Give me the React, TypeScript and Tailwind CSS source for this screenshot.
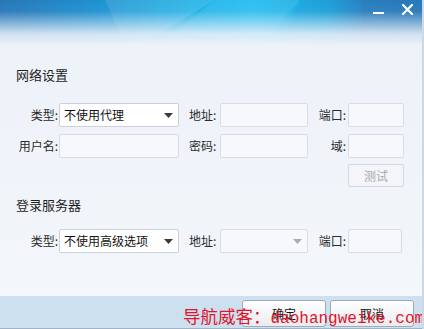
import React from "react";

function Arrow({ color }: { color: string }) {
  return (
    <svg width="9" height="5" viewBox="0 0 9 5">
      <polygon points="0,0 9,0 4.5,5" fill={color} />
    </svg>
  );
}

function Select({ text, width, disabled }: { text?: string; width: string; disabled?: boolean }) {
  return (
    <div
      className={`${width} h-[24px] flex items-center justify-between pl-[4px] pr-[5px] border rounded-[2px] ${
        disabled ? "bg-[#f6f8fb] border-[#d6dde6]" : "bg-white border-[#c9d2dc]"
      }`}
    >
      <span className="text-[12px] text-[#111] leading-none">{text}</span>
      <Arrow color={disabled ? "#a9adb2" : "#3a3a3a"} />
    </div>
  );
}

function Input({ width }: { width: string }) {
  return <div className={`${width} h-[24px] bg-[#f6f8fb] border border-[#d6dde6] rounded-[2px]`} />;
}

function L1({ children }: { children: React.ReactNode }) {
  return <div className="w-[43px] text-right text-[12px] text-[#2a2a2a] pr-[1px]">{children}</div>;
}
function L2({ children }: { children: React.ReactNode }) {
  return <div className="w-[41px] pl-[10px] text-[12px] text-[#2a2a2a]">{children}</div>;
}
function L3({ children }: { children: React.ReactNode }) {
  return <div className="w-[40px] text-right pr-[2px] text-[12px] text-[#2a2a2a]">{children}</div>;
}

export default function App() {
  return (
    <div className="relative w-[424px] h-[329px] overflow-hidden flex flex-col border-r-2 border-[#cdd8e4] bg-[linear-gradient(to_bottom,#ecf1f8,#f4f7fb)] font-['Noto_Sans_CJK_SC',sans-serif]">
      {/* header */}
      <div className="relative h-[45px] shrink-0 bg-[linear-gradient(to_right,#2777b6_0%,#1f8fcf_22%,#1cb0e6_45%,#1ebbef_60%,#1fa6df_78%,#2b86c6_86%,#2a7fc0_100%)]">
        <svg className="absolute inset-0" width="422" height="45" viewBox="0 0 422 45">
          <polygon points="105,0 215,0 140,45 125,45" fill="rgba(255,255,255,0.10)" />
          <polygon points="215,0 300,0 260,45 160,45" fill="rgba(255,255,255,0.08)" />
          <polygon points="300,0 362,0 362,45 280,45" fill="rgba(0,40,90,0.05)" />
          <rect x="362" y="0" width="60" height="45" fill="rgba(20,60,120,0.10)" />
          <defs>
            <linearGradient id="fade" x1="0" y1="0" x2="0" y2="1">
              <stop offset="0" stopColor="#eef2f9" stopOpacity="0" />
              <stop offset="0.25" stopColor="#eef2f9" stopOpacity="0.05" />
              <stop offset="0.75" stopColor="#eef2f9" stopOpacity="0.85" />
              <stop offset="1" stopColor="#ecf1f8" stopOpacity="1" />
            </linearGradient>
          </defs>
          <rect x="0" y="0" width="422" height="45" fill="url(#fade)" />
        </svg>
        <div className="relative flex justify-end items-start pr-[9px]">
          <div className="w-[11px] h-[2px] bg-white mt-[12px] mr-[18px]" />
          <svg width="11" height="11" viewBox="0 0 11 11" className="mt-[4px]">
            <path d="M1 1 L10 10 M10 1 L1 10" stroke="white" strokeWidth="2.2" strokeLinecap="square" />
          </svg>
        </div>
      </div>

      {/* body */}
      <div className="flex flex-col pl-[16px]">
        <div className="mt-[21px] h-[17px] leading-[17px] text-[13px] text-[#1e1e1e]">网络设置</div>

        <div className="mt-[20px] flex items-center h-[24px]">
          <L1>类型:</L1>
          <Select text="不使用代理" width="w-[120px]" />
          <L2>地址:</L2>
          <Input width="w-[88px]" />
          <L3>端口:</L3>
          <Input width="w-[56px]" />
        </div>

        <div className="mt-[7px] flex items-center h-[24px]">
          <L1>用户名:</L1>
          <Input width="w-[120px]" />
          <L2>密码:</L2>
          <Input width="w-[88px]" />
          <L3>域:</L3>
          <Input width="w-[56px]" />
        </div>

        <div className="mt-[6px] flex">
          <div className="ml-[332px] w-[56px] h-[23px] flex items-center justify-center bg-[#f3f5f8] border border-[#d3d9e0] rounded-[2px] text-[12px] text-[#a9a9a9]">
            测试
          </div>
        </div>

        <div className="mt-[9px] h-[17px] leading-[17px] text-[13px] text-[#1e1e1e]">登录服务器</div>

        <div className="mt-[16px] flex items-center h-[24px]">
          <L1>类型:</L1>
          <Select text="不使用高级选项" width="w-[120px]" />
          <L2>地址:</L2>
          <Select width="w-[88px]" disabled />
          <L3>端口:</L3>
          <Input width="w-[54px]" />
        </div>
      </div>

      <div className="flex-1" />

      {/* footer */}
      <div className="h-[33px] shrink-0 bg-[#cde0f0] border-b border-[#9fb3c6] flex justify-end items-start pt-[4px] pr-[8px] gap-[4px]">
        <div className="w-[84px] h-[27px] flex items-center justify-center bg-[linear-gradient(to_bottom,#ffffff,#e9ebee)] border border-[#a2a9b1] rounded-[3px] text-[12px] text-[#111]">
          确定
        </div>
        <div className="w-[84px] h-[27px] flex items-center justify-center bg-[linear-gradient(to_bottom,#ffffff,#e9ebee)] border border-[#a2a9b1] rounded-[3px] text-[12px] text-[#111]">
          取消
        </div>
      </div>

      {/* watermark */}
      <div className="absolute left-[183px] top-[307px] flex items-baseline whitespace-nowrap text-[#e2142c] leading-none">
        <span className="text-[17.5px] font-['Noto_Sans_CJK_SC',serif]">导航威客：</span>
        <span className="text-[16px] font-['Liberation_Mono',monospace]">daohangweike.com</span>
      </div>
    </div>
  );
}
